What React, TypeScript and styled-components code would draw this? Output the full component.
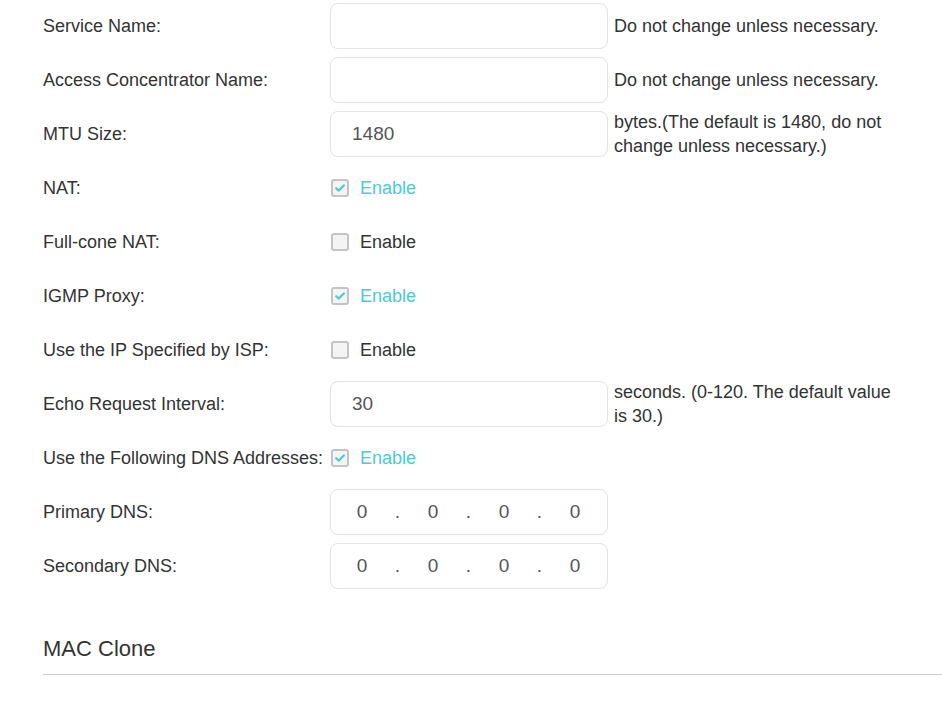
import { FC, Fragment } from "react";
import styled, { createGlobalStyle } from "styled-components";

const palette = {
  text: "#333333",
  value: "#555555",
  border: "#e3e3e3",
  teal: "#4acbd6",
  line: "#cccccc",
};

const GlobalStyle = createGlobalStyle`
  body {
    margin: 0;
    background: #ffffff;
    font-family: "Liberation Sans", Arial, sans-serif;
    color: ${palette.text};
  }
`;

const Page = styled.div`
  padding-left: 43px;
  margin-top: -1px;
`;

const Row = styled.div`
  display: grid;
  grid-template-columns: 281px 278px 280px;
  column-gap: 6px;
  align-items: center;
  height: 54px;
`;

const Label = styled.div`
  font-size: 18px;
  line-height: 22px;
  white-space: nowrap;
`;

const TextBox = styled.input`
  box-sizing: border-box;
  width: 278px;
  height: 46px;
  border: 1px solid ${palette.border};
  border-radius: 8px;
  padding: 0 21px;
  font-family: "Liberation Sans", Arial, sans-serif;
  font-size: 19px;
  color: ${palette.value};
  background: #fff;
  outline: none;
`;

const IpBox = styled.div`
  box-sizing: border-box;
  width: 278px;
  height: 46px;
  border: 1px solid ${palette.border};
  border-radius: 8px;
  padding: 0 7px;
  display: flex;
  align-items: center;
`;

const IpPart = styled.span`
  width: 48px;
  text-align: center;
  font-size: 19px;
  color: ${palette.value};
`;

const IpDot = styled.span`
  width: 23px;
  text-align: center;
  font-size: 19px;
  color: ${palette.value};
`;

const Hint = styled.div`
  font-size: 18px;
  line-height: 24px;
`;

const CheckWrap = styled.label`
  display: flex;
  align-items: center;
  gap: 11px;
  margin-left: 1px;
  cursor: pointer;
`;

const Box = styled.span`
  box-sizing: border-box;
  width: 18px;
  height: 18px;
  border: 2px solid #c4c4c4;
  border-radius: 3px;
  background: #f4f4f4;
  display: flex;
  align-items: center;
  justify-content: center;
`;

const CheckText = styled.span<{ $on: boolean }>`
  font-size: 18px;
  color: ${(p) => (p.$on ? palette.teal : palette.text)};
`;

const SectionTitle = styled.h2`
  margin: 41px 0 0;
  padding-bottom: 10px;
  border-bottom: 1px solid ${palette.line};
  font-size: 22px;
  font-weight: normal;
  line-height: 30px;
  color: ${palette.text};
`;

const Check: FC<{ on: boolean }> = ({ on }) => (
  <CheckWrap>
    <Box>
      {on && (
        <svg width="10" height="8" viewBox="0 0 10 8">
          <path
            d="M1.2 4.2 L3.8 6.6 L8.8 1.4"
            fill="none"
            stroke={palette.teal}
            strokeWidth="2.2"
            strokeLinecap="round"
            strokeLinejoin="round"
          />
        </svg>
      )}
    </Box>
    <CheckText $on={on}>Enable</CheckText>
  </CheckWrap>
);

const Ip: FC<{ value: string }> = ({ value }) => (
  <IpBox>
    {value.split(".").map((p, i) => (
      <Fragment key={i}>
        {i > 0 && <IpDot>.</IpDot>}
        <IpPart>{p}</IpPart>
      </Fragment>
    ))}
  </IpBox>
);

export default function App() {
  return (
    <Page>
      <GlobalStyle />
      <Row>
        <Label>Service Name:</Label>
        <TextBox defaultValue="" />
        <Hint>Do not change unless necessary.</Hint>
      </Row>
      <Row>
        <Label>Access Concentrator Name:</Label>
        <TextBox defaultValue="" />
        <Hint>Do not change unless necessary.</Hint>
      </Row>
      <Row>
        <Label>MTU Size:</Label>
        <TextBox defaultValue="1480" />
        <Hint>bytes.(The default is 1480, do not change unless necessary.)</Hint>
      </Row>
      <Row>
        <Label>NAT:</Label>
        <Check on />
      </Row>
      <Row>
        <Label>Full-cone NAT:</Label>
        <Check on={false} />
      </Row>
      <Row>
        <Label>IGMP Proxy:</Label>
        <Check on />
      </Row>
      <Row>
        <Label>Use the IP Specified by ISP:</Label>
        <Check on={false} />
      </Row>
      <Row>
        <Label>Echo Request Interval:</Label>
        <TextBox defaultValue="30" />
        <Hint>seconds. (0-120. The default value is 30.)</Hint>
      </Row>
      <Row>
        <Label>Use the Following DNS Addresses:</Label>
        <Check on />
      </Row>
      <Row>
        <Label>Primary DNS:</Label>
        <Ip value="0.0.0.0" />
      </Row>
      <Row>
        <Label>Secondary DNS:</Label>
        <Ip value="0.0.0.0" />
      </Row>
      <SectionTitle>MAC Clone</SectionTitle>
    </Page>
  );
}
